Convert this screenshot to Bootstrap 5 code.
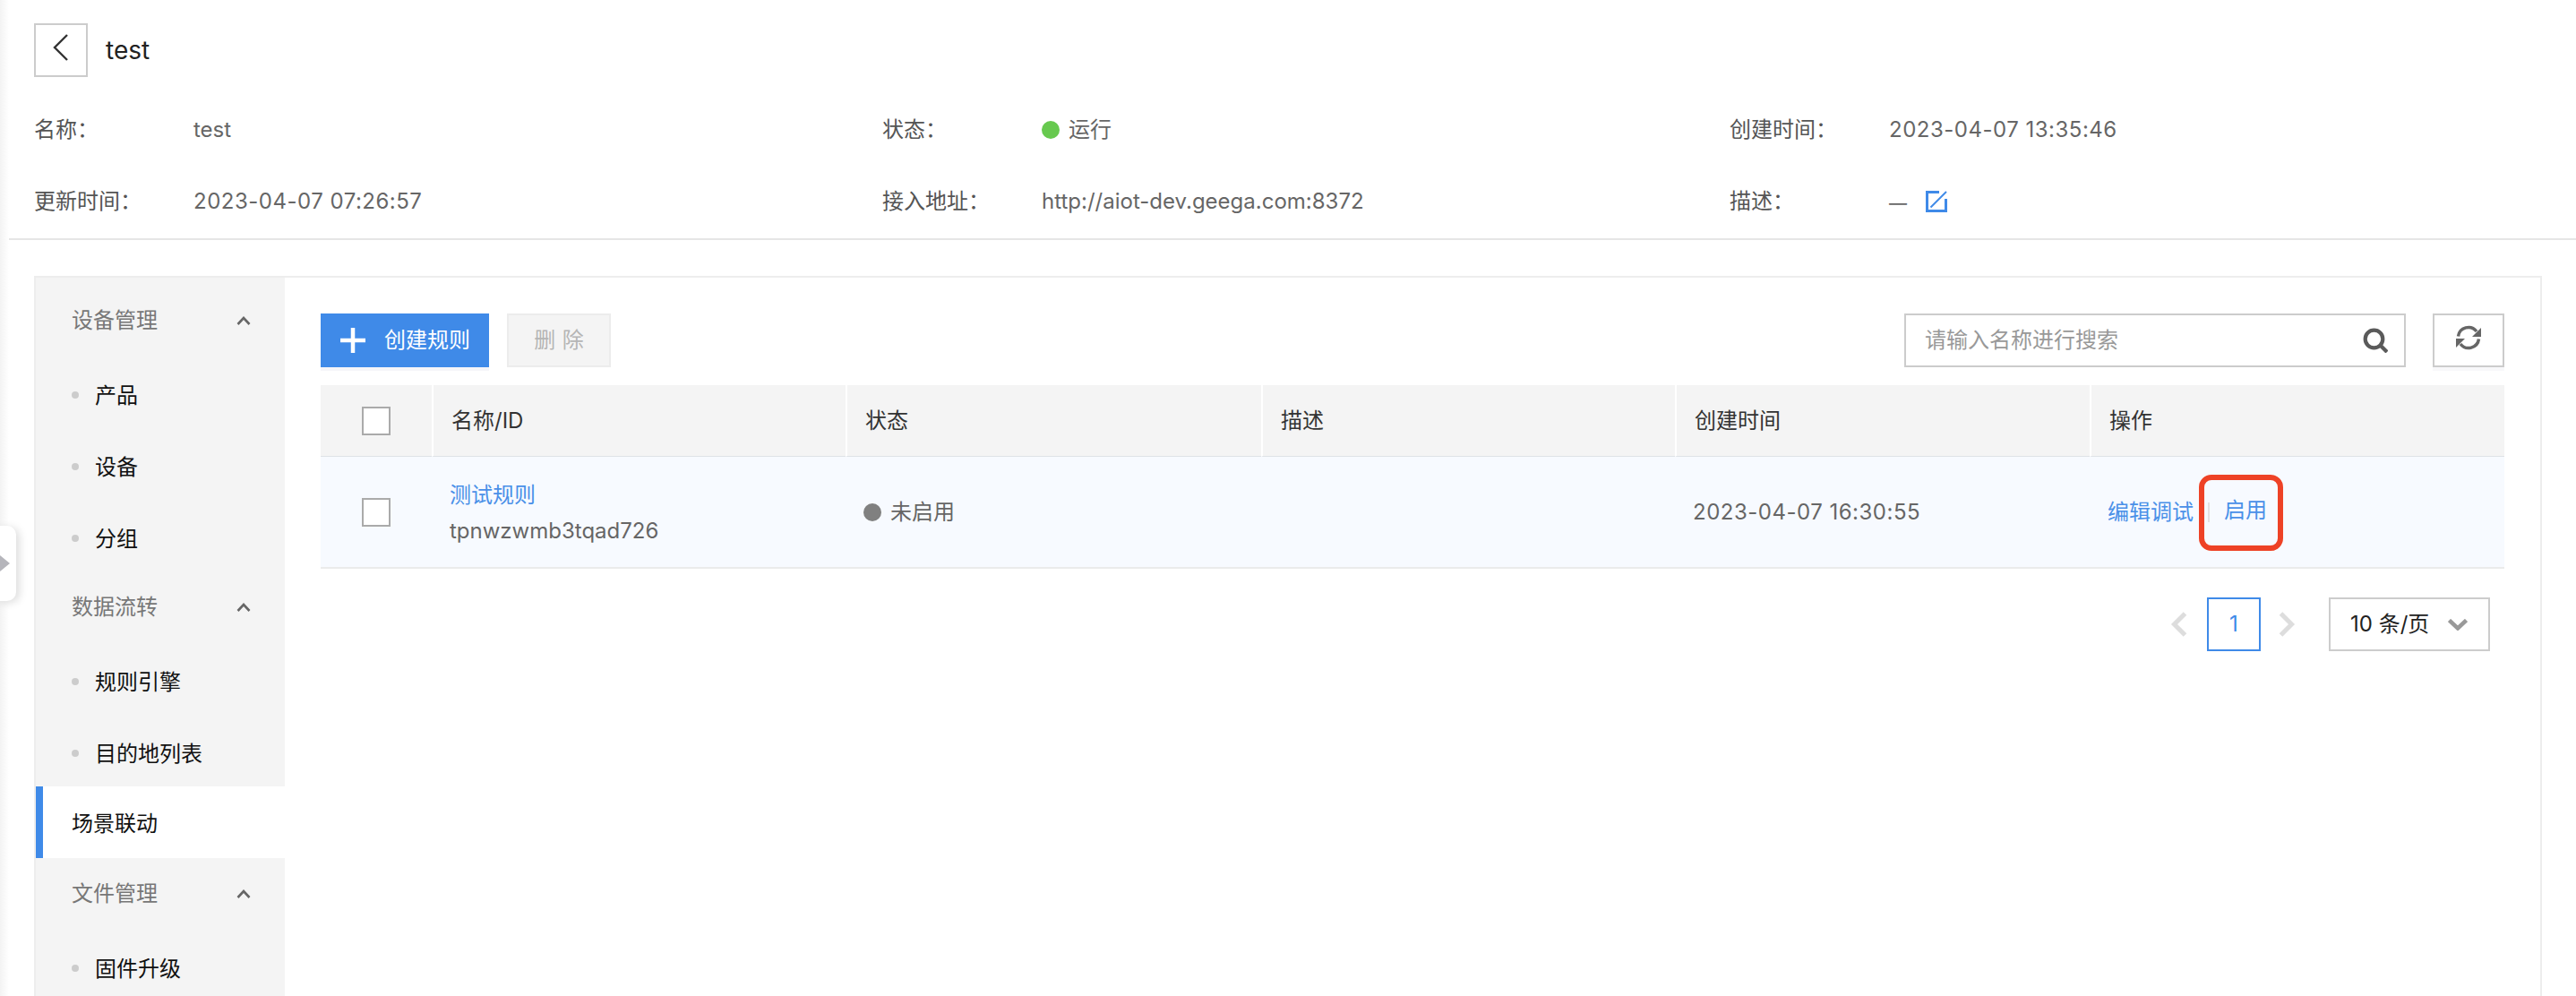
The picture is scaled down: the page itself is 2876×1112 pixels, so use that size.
<!DOCTYPE html>
<html lang="zh">
<head>
<meta charset="utf-8">
<title>test</title>
<link rel="stylesheet" href="https://cdn.jsdelivr.net/npm/bootstrap@5.3.0/dist/css/bootstrap.min.css">
<style>
html,body{height:100%;overflow:hidden}
body{background:#fff;font-family:Inter,"Noto Sans CJK SC",sans-serif;font-size:24px;color:#666;line-height:34px;position:relative}
.edge-shade{position:absolute;left:0;top:0;bottom:0;width:10px;background:linear-gradient(90deg,#f3f3f3,#fff)}
.handle{position:absolute;left:-4px;top:587px;width:22px;height:84px;background:#fff;border-radius:0 10px 10px 0;box-shadow:4px 2px 10px rgba(0,0,0,.13);display:flex;align-items:center}
.handle i{display:block;margin-left:4px;border-left:11px solid #b5b5bb;border-top:9px solid transparent;border-bottom:9px solid transparent}
.page-top{height:268px;border-bottom:2px solid #e6e6e6;padding:26px 38px 0}
.back-box{width:60px;height:60px;border:2px solid #ccc;display:flex;align-items:center;justify-content:center;padding-bottom:6px}
.page-title{font-size:28px;color:#222;margin-left:20px}
.info-grid{display:grid;grid-template-columns:947px 946px 1fr;row-gap:46px;margin-top:42px}
.info-item{display:flex;align-items:center;height:34px}
.info-label{width:178px;flex:none;color:#555}
.date-text{letter-spacing:.5px}
.dot-run,.dot-off{display:inline-block;width:20px;height:20px;border-radius:50%;background:#67c94f;margin-right:10px}
.dot-off{background:#808080;margin-right:10px}
.dash-text{font-size:20px;line-height:34px;position:relative;top:2px}
.edit-ic{margin-left:21px}
.main-box{margin:40px 38px 0;height:804px;overflow:hidden;border:2px solid #ededed;border-bottom:0;display:flex}
.side-nav{width:278px;flex:none;background:#f4f4f4;padding-top:8px}
.nav-head{height:80px;padding:0 38px 0 40px;display:flex;align-items:center;justify-content:space-between;color:#777}
.nav-sub{list-style:none;margin:4px 0 -4px;padding:0}
.nav-sub li{height:80px;padding-left:40px;display:flex;align-items:center;color:#111}
.nav-sub li::before{content:"";width:8px;height:8px;border-radius:50%;background:#ccc;margin-right:18px;margin-top:-2px}
.nav-active{height:80px;position:relative;background:#fff;border-left:8px solid #3f8ae8;padding:4px 0 0 32px;display:flex;align-items:center;color:#111}
.main-pane{flex:1;padding:40px 40px 0}
.tool-row{height:60px;margin-bottom:20px;display:flex;align-items:flex-start}
.btn-make{width:188px;height:60px;background:#3f8ae8;color:#fff;border:0;border-radius:0;display:flex;align-items:center;padding:0 0 0 22px;font-size:24px;line-height:34px;box-shadow:0 4px 0 #f5f5f9}
.btn-make:hover{background:#3f8ae8;color:#fff}
.btn-make svg{margin-right:21px}
.btn-del{width:116px;height:60px;margin-left:20px;background:#f4f4f4;color:#b5b5b5;border:2px solid #ececec;border-radius:0;font-size:24px;padding:0;line-height:34px;white-space:pre;word-spacing:1px}
.btn-del:disabled{background:#f4f4f4;color:#b5b5b5;border-color:#ececec;opacity:1}
.search-box{width:560px;height:60px;border:2px solid #ccc;margin-left:auto;display:flex;align-items:center;justify-content:space-between;padding:0 18px 0 21px;color:#999}
.btn-sync{width:80px;height:60px;margin-left:30px;border:2px solid #ccc;display:flex;align-items:center;justify-content:center;background:#fff;padding-bottom:6px;box-shadow:0 4px 0 #f8f8fa}
.rule-table{width:100%;table-layout:fixed;margin:0;border-collapse:separate;border-spacing:0}
.rule-table th{height:80px;background:#f4f4f4;font-weight:400;color:#333;padding:0 0 0 20px;border-left:2px solid #fff;vertical-align:middle}
.rule-table th:first-child,.rule-table td:first-child{border-left:0;padding:0 0 0 46px}
.rule-table td{height:125px;background:#f7faff;border-bottom:2px solid #ebebeb;padding:0 0 0 20px;vertical-align:middle;color:#666}
.tick{display:block;width:32px;height:32px;border:2px solid #aaa;background:#fff}
.rule-link{color:#4a90e8;text-decoration:none;display:block;margin-bottom:6px;padding-top:3px}
.rule-id{display:block;color:#666}
.act-cell{display:flex;align-items:center;position:relative}
.act-cell a{color:#4a90e8;text-decoration:none}
.act-sep{width:2px;height:22px;background:#e2e2e2;margin:0 16px}
.act-on{position:relative;top:-2px}
.red-mark{position:absolute;left:102px;top:-25px;width:94px;height:85px;border:6px solid #ee4226;border-radius:14px;pointer-events:none}
.pager-row{display:flex;justify-content:flex-end;align-items:center;margin-top:32px;padding-right:16px}
.page-one{width:60px;height:60px;border:2px solid #3f8ae8;color:#3f8ae8;display:flex;align-items:center;justify-content:center;margin:0 19px 0 21px}
.page-size{width:180px;height:60px;border:2px solid #ccc;margin-left:37px;display:flex;align-items:center;justify-content:space-between;padding:0 23px 0 22px;color:#222}
</style>
</head>
<body>
<div class="edge-shade"></div>
<div class="page-top">
  <div class="d-flex align-items-center">
    <div class="back-box"><svg width="22" height="32" viewBox="0 0 22 32"><path d="M18 2 4 16l14 14" fill="none" stroke="#333" stroke-width="2.400"/></svg></div>
    <div class="page-title">test</div>
  </div>
  <div class="info-grid">
    <div class="info-item"><span class="info-label">名称：</span><span>test</span></div>
    <div class="info-item"><span class="info-label">状态：</span><span class="dot-run"></span><span>运行</span></div>
    <div class="info-item"><span class="info-label">创建时间：</span><span class="date-text">2023-04-07 13:35:46</span></div>
    <div class="info-item"><span class="info-label">更新时间：</span><span class="date-text">2023-04-07 07:26:57</span></div>
    <div class="info-item"><span class="info-label">接入地址：</span><span>http://aiot-dev.geega.com:8372</span></div>
    <div class="info-item"><span class="info-label">描述：</span><span class="dash-text">—</span>
      <svg class="edit-ic" width="24" height="24" viewBox="0 0 24 24" fill="none" stroke="#3f8ae8"><path d="M15 1.500H1.500v21h21V9" stroke-width="3"/><path d="M23 1 5.500 18.500" stroke-width="2"/></svg></div>
  </div>
</div>
<div class="main-box">
  <nav class="side-nav">
    <div class="nav-head"><span>设备管理</span><svg width="16" height="12" viewBox="0 0 16 12"><path d="M1.500 10 8 3l6.500 7" fill="none" stroke="#666" stroke-width="2.600"/></svg></div>
    <ul class="nav-sub"><li>产品</li><li>设备</li><li>分组</li></ul>
    <div class="nav-head"><span>数据流转</span><svg width="16" height="12" viewBox="0 0 16 12"><path d="M1.500 10 8 3l6.500 7" fill="none" stroke="#666" stroke-width="2.600"/></svg></div>
    <ul class="nav-sub"><li>规则引擎</li><li>目的地列表</li></ul>
    <div class="nav-active">场景联动</div>
    <div class="nav-head"><span>文件管理</span><svg width="16" height="12" viewBox="0 0 16 12"><path d="M1.500 10 8 3l6.500 7" fill="none" stroke="#666" stroke-width="2.600"/></svg></div>
    <ul class="nav-sub"><li>固件升级</li></ul>
  </nav>
  <div class="main-pane">
    <div class="tool-row">
      <button class="btn btn-make" type="button"><svg width="28" height="28" viewBox="0 0 28 28"><path d="M14 0v28M0 14h28" stroke="#fff" stroke-width="4.500"/></svg>创建规则</button>
      <button class="btn btn-del" type="button" disabled>删 除</button>
      <div class="search-box"><span>请输入名称进行搜索</span>
        <svg width="28" height="28" viewBox="0 0 28 28" fill="none" stroke="#5a5a5a" stroke-width="4.200"><circle cx="12.500" cy="12.500" r="9.800"/><path d="m19.500 19.500 7.500 7.500"/></svg></div>
      <div class="btn-sync"><svg width="28" height="28" viewBox="0 0 28 28" fill="none" stroke="#666" stroke-width="3.500"><path d="M2.500 12.500A11.500 11.500 0 0 1 23 7"/><path d="M25.500 15.500A11.500 11.500 0 0 1 5 21"/><path d="M28 3v10H18z" fill="#666" stroke="none"/><path d="M0 25V15h10z" fill="#666" stroke="none"/></svg></div>
    </div>
    <table class="table rule-table">
      <colgroup><col style="width:124px"><col style="width:462px"><col style="width:464px"><col style="width:462px"><col style="width:463px"><col></colgroup>
      <thead><tr><th><span class="tick"></span></th><th>名称/ID</th><th>状态</th><th>描述</th><th>创建时间</th><th>操作</th></tr></thead>
      <tbody><tr>
        <td><span class="tick"></span></td>
        <td><a class="rule-link" href="#">测试规则</a><span class="rule-id">tpnwzwmb3tqad726</span></td>
        <td><span class="d-flex align-items-center"><span class="dot-off"></span>未启用</span></td>
        <td></td>
        <td><span class="date-text">2023-04-07 16:30:55</span></td>
        <td><div class="act-cell"><a href="#">编辑调试</a><span class="act-sep"></span><a class="act-on" href="#">启用</a><span class="red-mark"></span></div></td>
      </tr></tbody>
    </table>
    <div class="pager-row">
      <svg width="20" height="28" viewBox="0 0 20 28"><path d="M16.500 2 4.500 14l12 12" fill="none" stroke="#ddd" stroke-width="5"/></svg>
      <div class="page-one">1</div>
      <svg width="20" height="28" viewBox="0 0 20 28"><path d="m3.500 2 12 12-12 12" fill="none" stroke="#ddd" stroke-width="5"/></svg>
      <div class="page-size"><span>10 条/页</span><svg width="22" height="13" viewBox="0 0 22 13"><path d="m1.500 1.500 9.500 9 9.500-9" fill="none" stroke="#999" stroke-width="4.500"/></svg></div>
    </div>
  </div>
</div>
<div class="handle"><i></i></div>
<script src="https://cdn.jsdelivr.net/npm/bootstrap@5.3.0/dist/js/bootstrap.bundle.min.js"></script>
</body>
</html>
